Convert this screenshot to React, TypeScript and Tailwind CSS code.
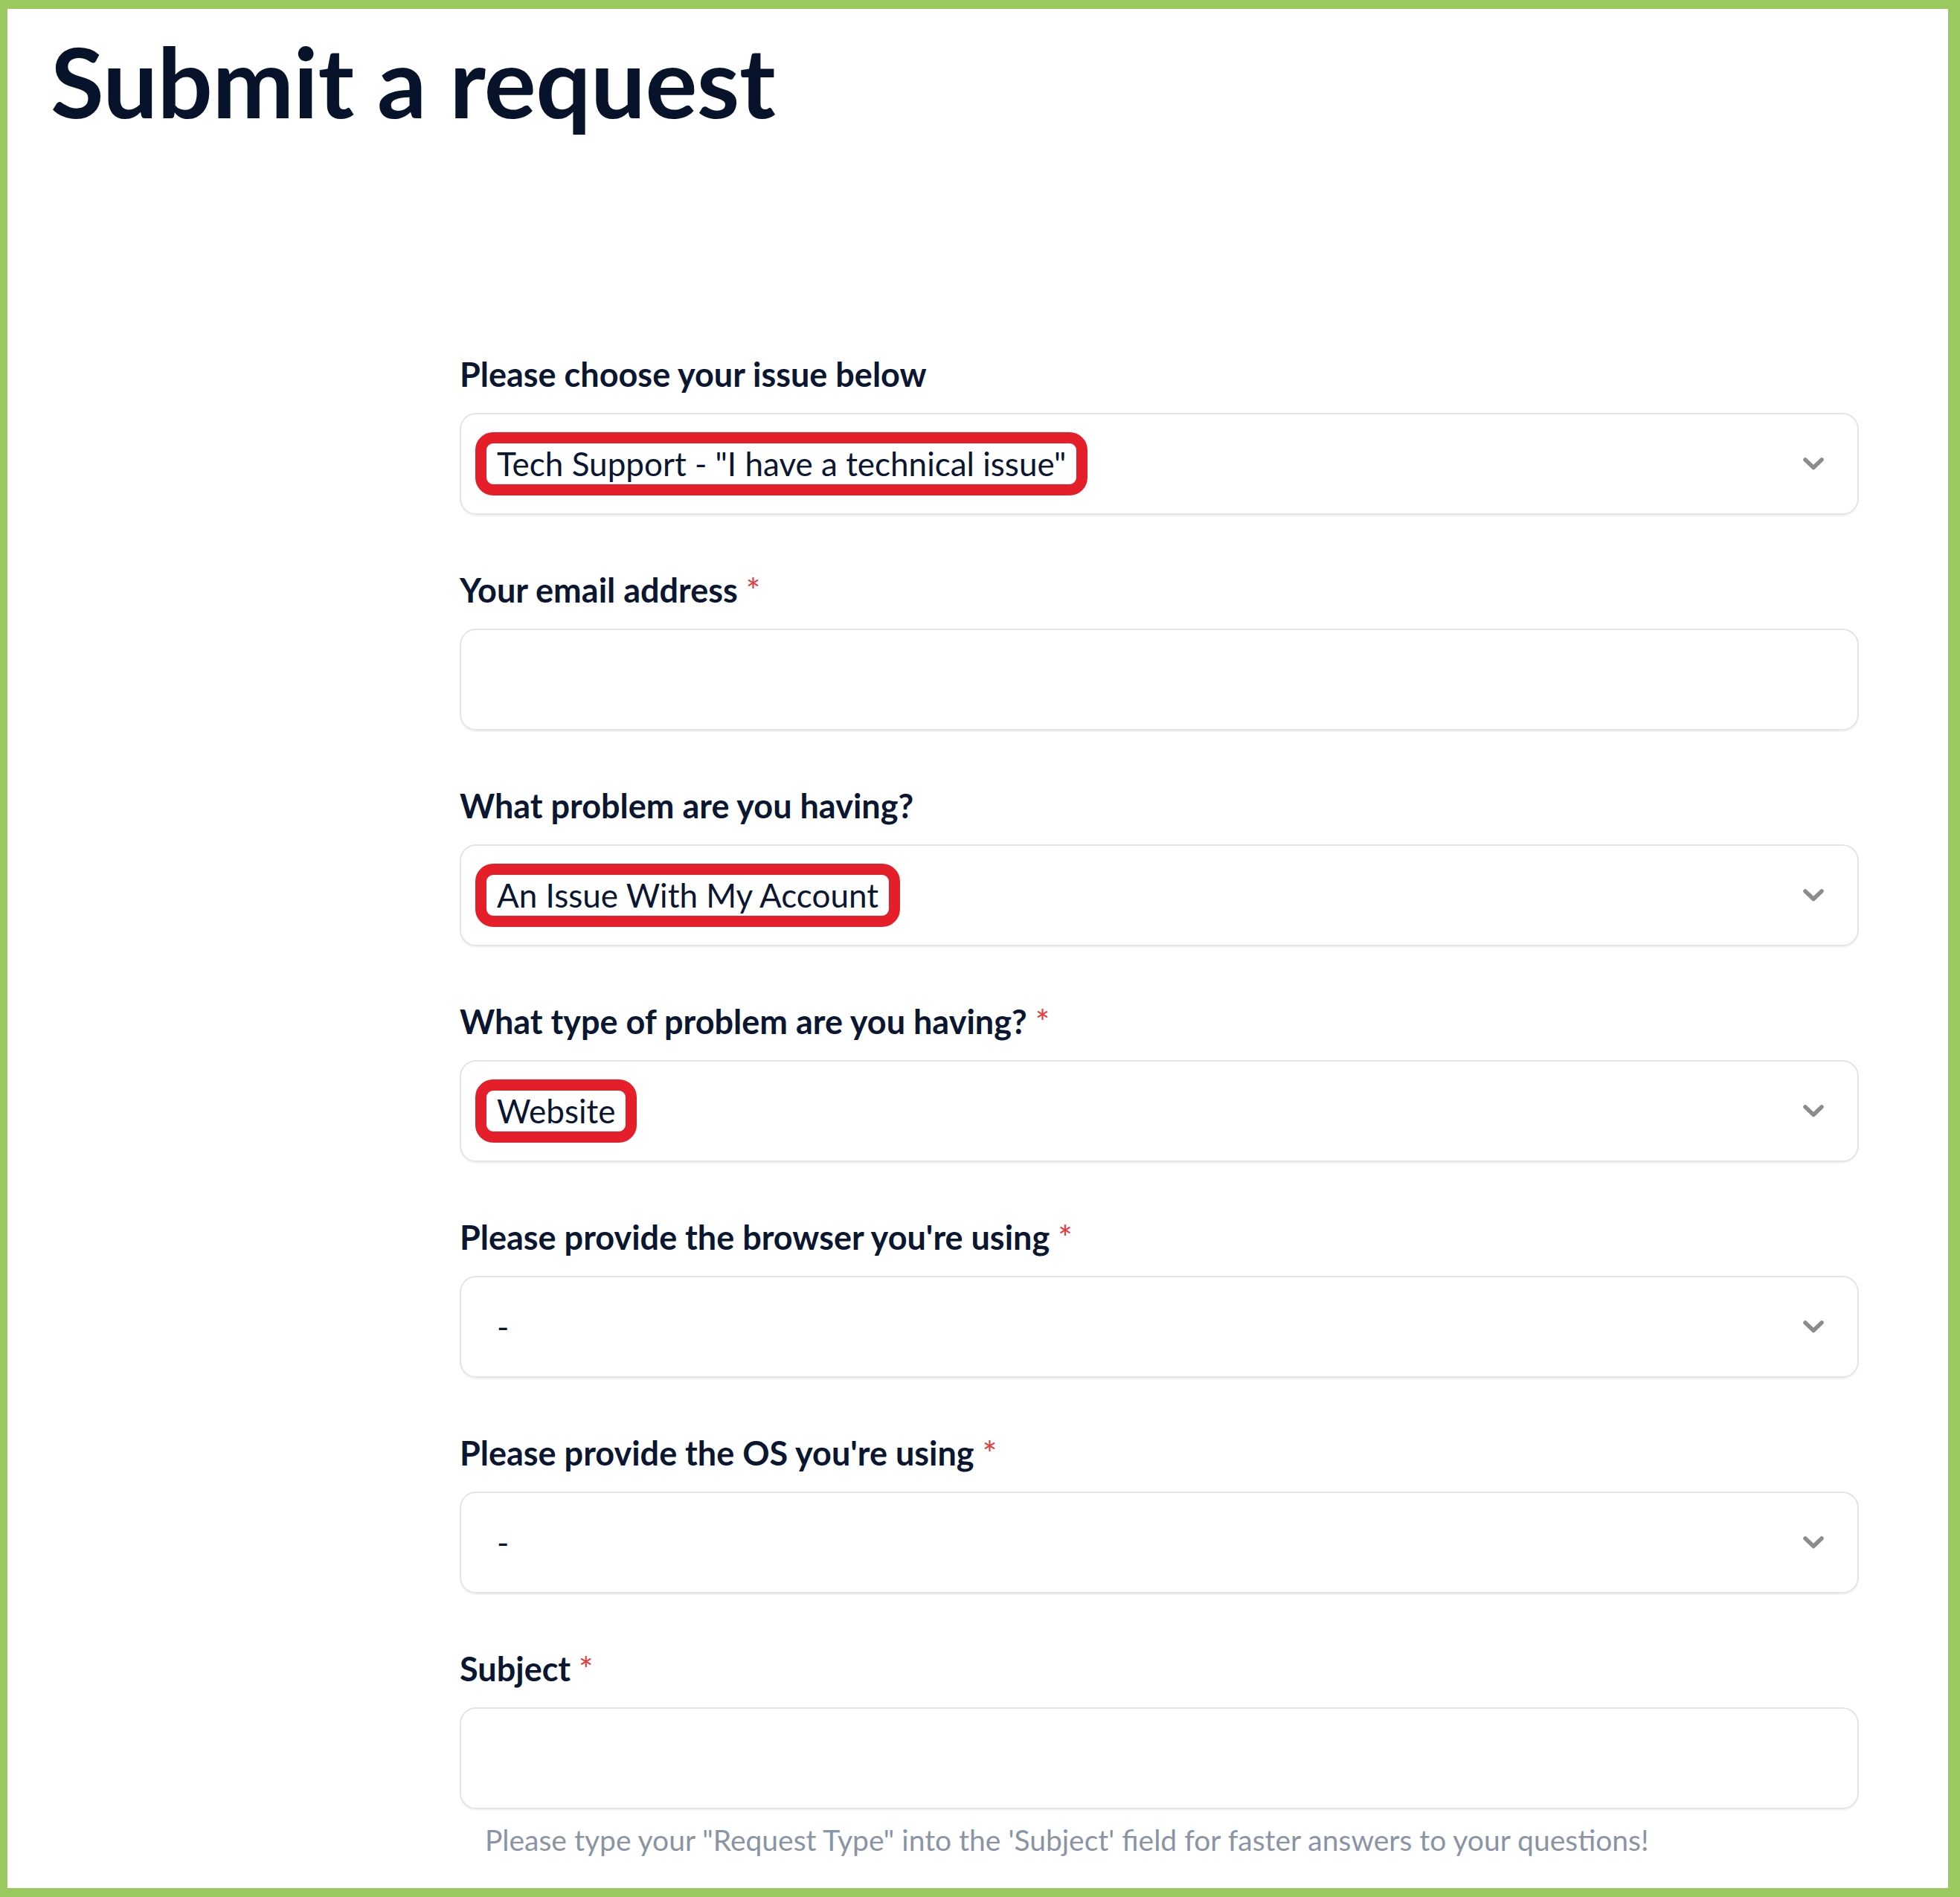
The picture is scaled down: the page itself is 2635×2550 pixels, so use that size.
import React from 'react';

type Field = {
  label: string;
  required?: boolean;
  value?: string;
  highlight?: boolean;
  select?: boolean;
};

const fields: Field[] = [
  { label: 'Please choose your issue below', value: 'Tech Support - "I have a technical issue"', highlight: true, select: true },
  { label: 'Your email address', required: true },
  { label: 'What problem are you having?', value: 'An Issue With My Account', highlight: true, select: true },
  { label: 'What type of problem are you having?', required: true, value: 'Website', highlight: true, select: true },
  { label: "Please provide the browser you're using", required: true, value: '-', select: true },
  { label: "Please provide the OS you're using", required: true, value: '-', select: true },
  { label: 'Subject', required: true },
];

const Chevron: React.FC = () => (
  <svg width="30" height="19" viewBox="0 0 30 19" className="shrink-0">
    <path d="M4 4 L15 14.5 L26 4" fill="none" stroke="#8c8c8c" strokeWidth="5.5" strokeLinecap="round" strokeLinejoin="round" />
  </svg>
);

const App: React.FC = () => {
  return (
    <div className="w-[2635px] h-[2550px] bg-[#9aca5f] pt-[12px] pr-[16px] pb-[12px] pl-[10px] flex" style={{ fontFamily: 'Lato, "Open Sans", sans-serif' }}>
      <div className="flex-1 bg-white flex flex-col">
        <h1 className="pl-[58px] pt-[18px] text-[131px] leading-[1.2] font-bold tracking-[-0.5px] text-[#07122b]">Submit a request</h1>

        <div className="ml-[608px] w-[1881px] mt-[289px] flex flex-col">
          {fields.map((f, i) => (
            <div key={f.label} className={`flex flex-col ${i === fields.length - 1 ? '' : 'mb-[74px]'}`}>
              <label className="h-[54px] text-[45px] leading-[1.2] font-bold text-[#0b1630] flex items-start">
                <span>{f.label}</span>
                {f.required && <span className="ml-[11px] text-[46px] leading-none mt-[5px] font-normal text-[#e5393b]">*</span>}
              </label>
              <div className="mt-[25px] h-[137px] rounded-[22px] border-2 border-[#e4e4e6] shadow-[0_2px_1px_rgba(0,0,0,0.05)] flex items-center pl-[19px] pr-[44px]">
                {f.value && (
                  <span
                    className={`border-[15px] rounded-[24px] px-[14px] py-[1px] text-[44px] leading-[1.2] text-[#0b1630] ${f.highlight ? 'border-[#e51f2a]' : 'border-transparent'}`}
                  >
                    {f.value}
                  </span>
                )}
                <div className="flex-1" />
                {f.select && <Chevron />}
              </div>
            </div>
          ))}
          <p className="pl-[34px] mt-[18px] text-[39px] leading-[1.2] text-[#8a94a4]">
            Please type your "Request Type" into the 'Subject' field for faster answers to your questions!
          </p>
        </div>
      </div>
    </div>
  );
};

export default App;
